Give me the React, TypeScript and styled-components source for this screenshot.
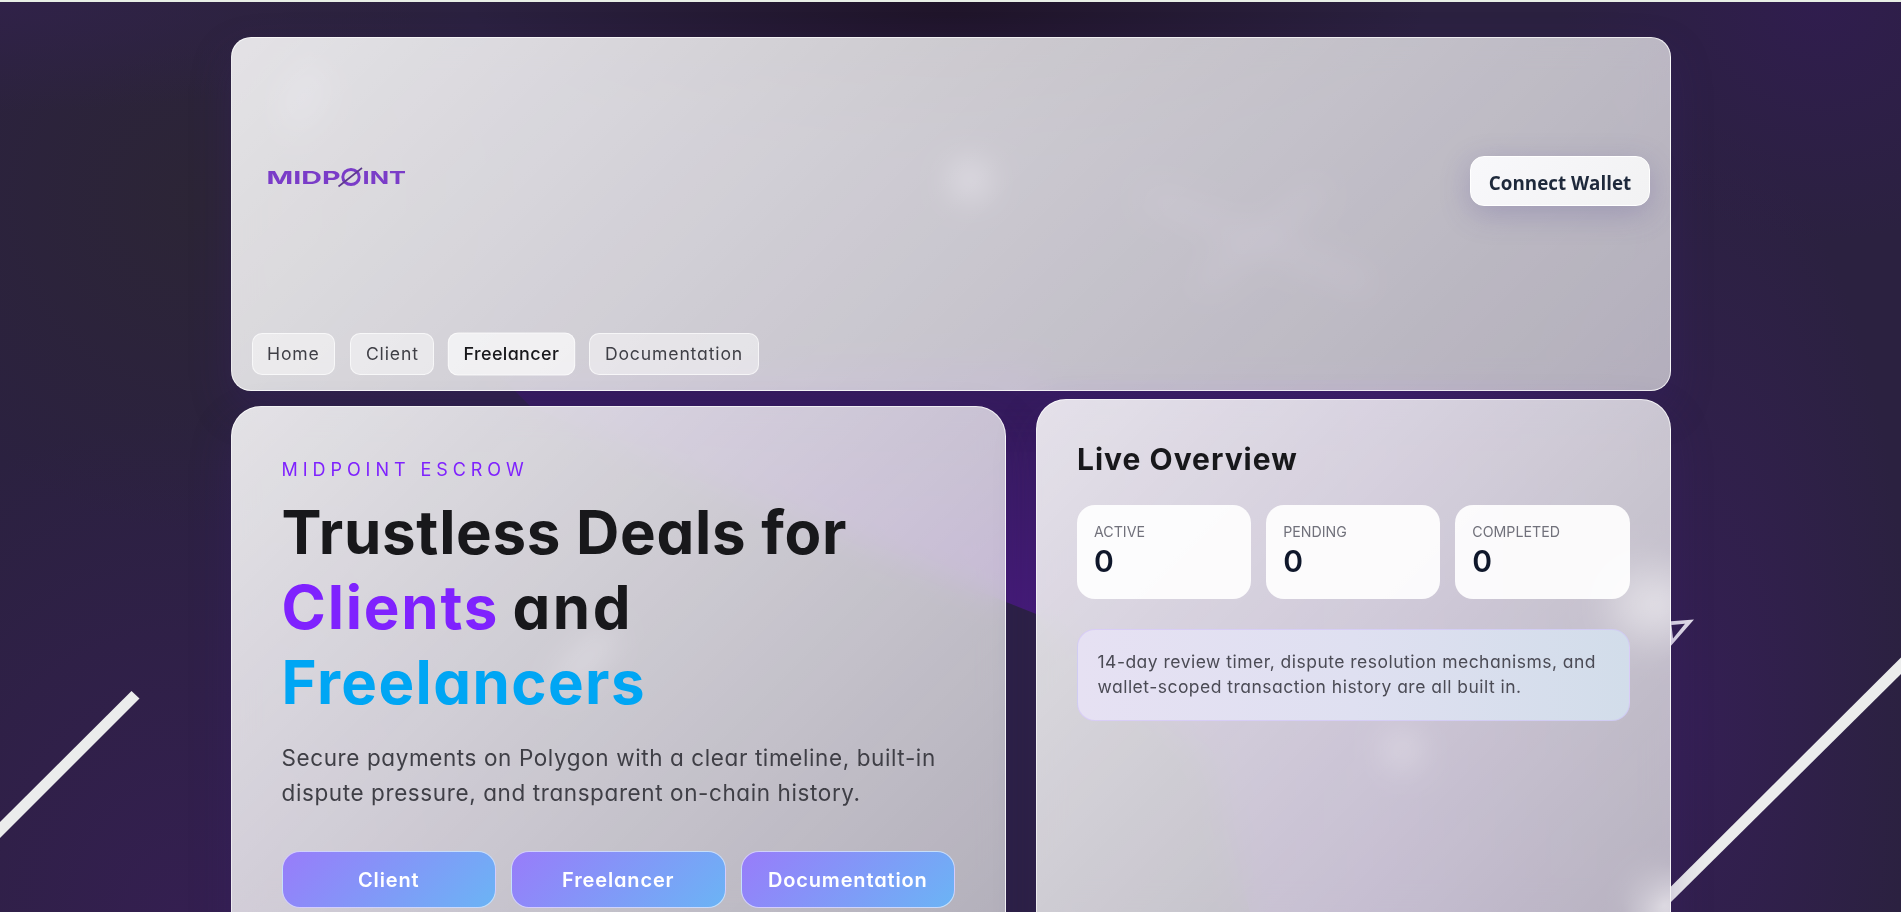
import React from 'react';
import styled, { createGlobalStyle, css } from 'styled-components';

const GlobalStyle = createGlobalStyle`
  * {
    box-sizing: border-box;
  }

  body {
    margin: 0;
    font-family: Inter, "Liberation Sans", sans-serif;
    font-feature-settings: "cv11";
    background: #2a2040;
  }
`;

const Page = styled.div`
  position: relative;
  height: 100vh;
  overflow: hidden;
  border-top: 2px solid #e8efe6;
  background:
    radial-gradient(ellipse 480px 150px at 950px 0px, #1f1429 0%, rgba(31, 20, 41, 0) 100%),
    radial-gradient(ellipse 420px 110px at 0px 0px, #302248 0%, rgba(48, 34, 72, 0) 100%),
    radial-gradient(ellipse 330px 330px at 200px 200px, #2c2536 0%, rgba(44, 37, 54, 0) 100%),
    radial-gradient(ellipse 260px 240px at 1820px 0px, #301d4e 0%, rgba(48, 29, 78, 0) 100%),
    radial-gradient(ellipse 420px 500px at 180px 912px, #341f50 0%, rgba(52, 31, 80, 0) 100%),
    radial-gradient(ellipse 210px 600px at 1700px 720px, #341f53 0%, rgba(52, 31, 83, 0) 100%),
    #2b2140;
`;

const Backdrop = styled.svg`
  position: absolute;
  top: -2px;
  left: 0;
`;

const Content = styled.div`
  position: relative;
  width: 1440px;
  margin: 0 auto;
  padding-top: 35px;
`;

const glass = css`
  border: 1px solid rgba(255, 255, 255, 0.75);
  background: linear-gradient(135deg, rgba(255, 255, 255, 0.87) 0%, rgba(255, 255, 255, 0.64) 100%);
  backdrop-filter: blur(16px);
  box-shadow: 0 18px 40px rgba(62, 30, 130, 0.25);
`;

const Header = styled.header`
  ${glass}
  display: flex;
  flex-direction: column;
  height: 354px;
  padding: 0 20px 15px;
  border-radius: 20px;
`;

const HeaderRow = styled.div`
  flex: 1;
  display: flex;
  align-items: center;
  justify-content: space-between;
  padding-bottom: 10px;
`;

const LogoMark = styled.svg`
  margin: 0 0 8px 13px;
  overflow: visible;
`;

const WalletButton = styled.button`
  width: 180px;
  height: 50px;
  padding: 4px 0 0 1px;
  border: 1px solid #fff;
  border-radius: 14px;
  background: linear-gradient(135deg, #f8f8fb, #f2f2f3);
  box-shadow: 0 8px 30px rgba(90, 80, 150, 0.28);
  color: #1e293b;
  font: 700 18.8px "Open Sans", sans-serif;
`;

const Nav = styled.nav`
  display: flex;
  gap: 15.2px;
`;

const NavLink = styled.a<{ $active?: boolean }>`
  height: 42px;
  padding: 0 14.5px;
  border: 1px solid rgba(255, 255, 255, 0.65);
  border-radius: 10px;
  background: rgba(255, 255, 255, 0.48);
  color: #3f3f46;
  font-size: 17.6px;
  line-height: 40px;
  letter-spacing: 0.85px;

  ${props => props.$active && css`
    background: rgba(255, 255, 255, 0.68);
    color: #18181b;
    font-weight: 500;
    letter-spacing: 0.35px;
    transform: scale(1.02);
  `}
`;

const Columns = styled.main`
  display: grid;
  grid-template-columns: 775.5px 634.5px;
  gap: 30px;
  margin-top: 15px;
`;

const Hero = styled.section`
  ${glass}
  height: 560px;
  padding: 50px;
  border-radius: 30px;
`;

const Eyebrow = styled.div`
  color: #7f22fe;
  font-size: 18px;
  line-height: 25px;
  letter-spacing: 4.95px;
`;

const Title = styled.h1`
  margin: 13px 0 0;
  color: #18181b;
  font-size: 60px;
  font-weight: 700;
  line-height: 75px;
  letter-spacing: 0.7px;
`;

const Word = styled.span<{ $color?: string; $spacing: number }>`
  margin-right: -${props => props.$spacing}px;
  color: ${props => props.$color};
  letter-spacing: ${props => props.$spacing}px;
`;

const Lead = styled.p`
  margin: 20px 0 41px;
  color: #3f3f46;
  font-size: 22.5px;
  line-height: 35px;
  letter-spacing: 0.6px;
  white-space: nowrap;
`;

const Actions = styled.div`
  display: grid;
  grid-template-columns: repeat(3, 1fr);
  gap: 15px;
`;

const ActionButton = styled.button`
  height: 57px;
  padding: 0;
  border: 1px solid rgba(255, 255, 255, 0.6);
  border-radius: 18px;
  background: linear-gradient(135deg, #987cfa, #6bb4f5);
  color: #fff;
  font: inherit;
  font-size: 20px;
  font-weight: 600;
  letter-spacing: 0.85px;
`;

const Overview = styled.aside`
  ${glass}
  height: 600px;
  margin-top: -7px;
  padding: 40px;
  border-radius: 30px;
`;

const OverviewTitle = styled.h2`
  margin: 0;
  color: #18181b;
  font-size: 30px;
  font-weight: 700;
  line-height: 38px;
  letter-spacing: 1px;
`;

const Stats = styled.div`
  display: grid;
  grid-template-columns: repeat(3, 1fr);
  gap: 15px;
  margin: 26.5px 0 30px;
`;

const Stat = styled.div`
  height: 94.5px;
  padding: 17px 17px 0;
  border-radius: 18px;
  background: rgba(255, 255, 255, 0.92);
`;

const StatLabel = styled.div`
  color: #71717b;
  font-size: 14.2px;
  line-height: 20px;
`;

const StatValue = styled.div`
  margin-top: 2px;
  color: #0f172b;
  font-size: 30px;
  font-weight: 600;
  line-height: 34px;
`;

const Note = styled.p`
  height: 92px;
  margin: 0;
  padding: 19px 19.5px;
  border: 1px solid rgba(205, 190, 250, 0.55);
  border-radius: 18px;
  background: linear-gradient(90deg, #e6e1f3 0%, #dfe0f1 50%, #d2ddea 100%);
  color: #4b4b55;
  font-size: 17.5px;
  line-height: 25px;
  letter-spacing: 0.48px;
  white-space: nowrap;
`;

function Scene() {
  return (
    <Backdrop width="1901" height="912" viewBox="0 0 1901 912">
      <defs>
        <linearGradient id="violet" x1="0" y1="380" x2="0" y2="620" gradientUnits="userSpaceOnUse">
          <stop offset="0" stopColor="#321b54" />
          <stop offset="1" stopColor="#461b78" />
        </linearGradient>
        <linearGradient id="violetFade" x1="1040" y1="0" x2="1660" y2="0" gradientUnits="userSpaceOnUse">
          <stop offset="0" stopColor="#351c5a" />
          <stop offset="0.55" stopColor="#3a1f60" />
          <stop offset="1" stopColor="#2f2048" />
        </linearGradient>
        <radialGradient id="glow">
          <stop offset="0" stopColor="#d5cfdc" stopOpacity="0.8" />
          <stop offset="0.5" stopColor="#d5cfdc" stopOpacity="0.35" />
          <stop offset="1" stopColor="#d5cfdc" stopOpacity="0" />
        </radialGradient>
        <clipPath id="panel">
          <rect x="1036" y="400" width="634" height="512" />
        </clipPath>
      </defs>
      <path d="M500 376 L515 391 L531 407 L760 502 L1006 602 L1040 615.5 L1040 360 Z" fill="url(#violet)" />
      <path d="M1040 380 L1660 380 L1660 912 L1250 912 L1210 760 L1040 615.5 Z" fill="url(#violetFade)" />
      <path d="M1145 195 L1370 285 M1320 190 L1200 285" stroke="#4a3a62" strokeWidth="14" />
      <path d="M310 55 L330 90 L300 135 L275 108 Z" fill="#4e4666" />
      <circle cx="970" cy="180" r="18" fill="#8a7f9c" />
      <path d="M560 685 L610 635" stroke="#8f85a0" strokeWidth="15" />
      <g fill="url(#glow)" clipPath="url(#panel)">
        <circle cx="1402" cy="750" r="24" />
        <circle cx="1648" cy="605" r="58" />
        <circle cx="1664" cy="905" r="42" />
      </g>
      <path
        d="M1671 621.3 L1694 619.6 L1671 645.7 Z M1671.5 625 L1685 623.8 L1673 638.5 Z"
        fill="#e4e0ea"
        fillRule="evenodd"
      />
      <path d="M131.5 691 L139.5 698.5 L0 838 L0 822 Z" fill="#ebecec" />
      <path d="M1901 657.5 L1901 674 L1671 902 L1671 886.5 Z" fill="#ebecec" />
    </Backdrop>
  );
}

function Logo() {
  return (
    <LogoMark width="142" height="24" viewBox="0 0 142 24" fill="#7a3cc8">
      <g fontFamily="Inter, sans-serif" fontSize="18" fontWeight="700">
        <text x="1.5" y="18.5" textLength="74" lengthAdjust="spacingAndGlyphs">MIDP</text>
        <text x="97.5" y="18.5" textLength="43.5" lengthAdjust="spacingAndGlyphs">INT</text>
      </g>
      <ellipse cx="86" cy="12" rx="8.2" ry="7.6" fill="none" stroke="#7a3cc8" strokeWidth="3" />
      <path d="M73.5 21.5 L97 3" stroke="#5d3a8c" strokeWidth="1.6" />
    </LogoMark>
  );
}

interface NavPage {
  name: string;
  active?: boolean;
}

const pages: NavPage[] = [
  { name: 'Home' },
  { name: 'Client' },
  { name: 'Freelancer', active: true },
  { name: 'Documentation' },
];

const stats = [
  { label: 'ACTIVE', value: 0 },
  { label: 'PENDING', value: 0 },
  { label: 'COMPLETED', value: 0 },
];

function App() {
  return (
    <Page>
      <GlobalStyle />
      <Scene />
      <Content>
        <Header>
          <HeaderRow>
            <Logo />
            <WalletButton>Connect Wallet</WalletButton>
          </HeaderRow>
          <Nav>
            {pages.map(page => (
              <NavLink key={page.name} $active={page.active}>{page.name}</NavLink>
            ))}
          </Nav>
        </Header>

        <Columns>
          <Hero>
            <Eyebrow>MIDPOINT ESCROW</Eyebrow>
            <Title>
              Trustless Deals for
              <br />
              <Word $color="#7f22fe" $spacing={1.8}>Clients</Word>{' '}
              <Word $spacing={2.6}>and</Word>
              <br />
              <Word $color="#00a6f4" $spacing={1.4}>Freelancers</Word>
            </Title>
            <Lead>
              Secure payments on Polygon with a clear timeline, built-in
              <br />
              dispute pressure, and transparent on-chain history.
            </Lead>
            <Actions>
              <ActionButton>Client</ActionButton>
              <ActionButton>Freelancer</ActionButton>
              <ActionButton>Documentation</ActionButton>
            </Actions>
          </Hero>

          <Overview>
            <OverviewTitle>Live Overview</OverviewTitle>
            <Stats>
              {stats.map(stat => (
                <Stat key={stat.label}>
                  <StatLabel>{stat.label}</StatLabel>
                  <StatValue>{stat.value}</StatValue>
                </Stat>
              ))}
            </Stats>
            <Note>
              14-day review timer, dispute resolution mechanisms, and
              <br />
              wallet-scoped transaction history are all built in.
            </Note>
          </Overview>
        </Columns>
      </Content>
    </Page>
  );
}

export default App;
